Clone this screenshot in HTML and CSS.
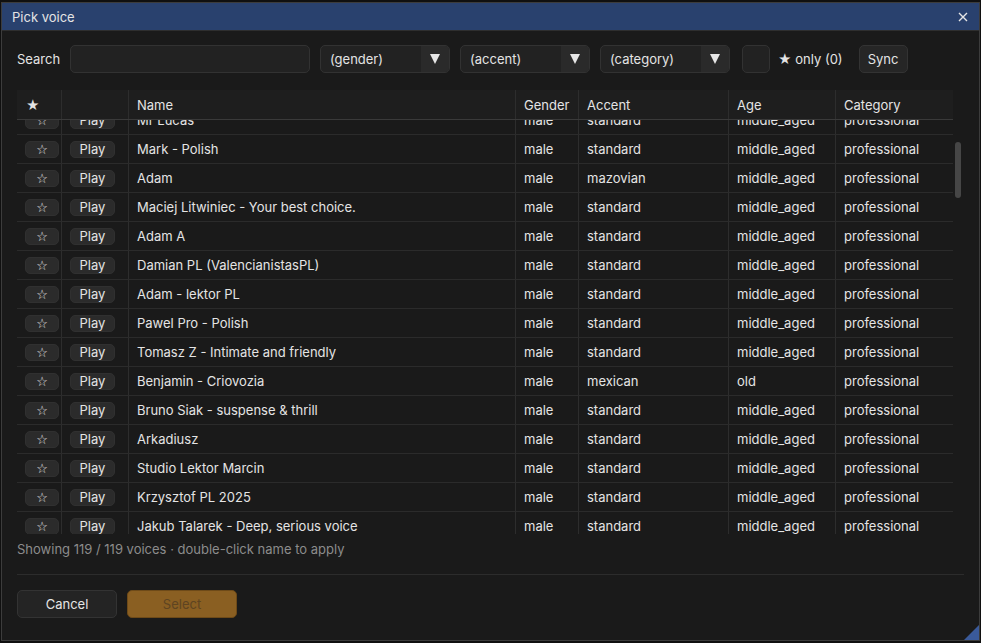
FILE: index.html
```html
<!DOCTYPE html>
<html lang="en">
<head>
  <meta charset="UTF-8">
  <title>Pick voice</title>
  <link rel="stylesheet" href="styles.css">
</head>
<body>
  <div class="window">
    <div class="titlebar">
      <span>Pick voice</span>
      <svg class="close" width="10" height="10" viewBox="0 0 10 10"><path d="M1 1L9 9M9 1L1 9" stroke="#e6e6e6" stroke-width="1.4"/></svg>
    </div>
    <div class="content">
      <div class="toolbar">
        <span class="label">Search</span>
        <div class="input"></div>
        <div class="combo"><span>(gender)</span><i></i></div>
        <div class="combo"><span>(accent)</span><i></i></div>
        <div class="combo last"><span>(category)</span><i></i></div>
        <div class="check"></div>
        <span class="only">&#9733; only (0)</span>
        <div class="btn sync">Sync</div>
      </div>

      <div class="table">
        <div class="thead">
          <div class="cell">&#9733;</div>
          <div class="cell"></div>
          <div class="cell">Name</div>
          <div class="cell">Gender</div>
          <div class="cell">Accent</div>
          <div class="cell">Age</div>
          <div class="cell">Category</div>
        </div>
        <div class="tbody">
          <div class="rows">
            <div class="row"><div class="cell"><b class="mini star">&#9734;</b></div><div class="cell"><b class="mini">Play</b></div><div class="cell">Mr Lucas</div><div class="cell">male</div><div class="cell">standard</div><div class="cell">middle_aged</div><div class="cell">professional</div></div>
            <div class="row"><div class="cell"><b class="mini star">&#9734;</b></div><div class="cell"><b class="mini">Play</b></div><div class="cell">Mark - Polish</div><div class="cell">male</div><div class="cell">standard</div><div class="cell">middle_aged</div><div class="cell">professional</div></div>
            <div class="row"><div class="cell"><b class="mini star">&#9734;</b></div><div class="cell"><b class="mini">Play</b></div><div class="cell">Adam</div><div class="cell">male</div><div class="cell">mazovian</div><div class="cell">middle_aged</div><div class="cell">professional</div></div>
            <div class="row"><div class="cell"><b class="mini star">&#9734;</b></div><div class="cell"><b class="mini">Play</b></div><div class="cell">Maciej Litwiniec - Your best choice.</div><div class="cell">male</div><div class="cell">standard</div><div class="cell">middle_aged</div><div class="cell">professional</div></div>
            <div class="row"><div class="cell"><b class="mini star">&#9734;</b></div><div class="cell"><b class="mini">Play</b></div><div class="cell">Adam A</div><div class="cell">male</div><div class="cell">standard</div><div class="cell">middle_aged</div><div class="cell">professional</div></div>
            <div class="row"><div class="cell"><b class="mini star">&#9734;</b></div><div class="cell"><b class="mini">Play</b></div><div class="cell">Damian PL (ValencianistasPL)</div><div class="cell">male</div><div class="cell">standard</div><div class="cell">middle_aged</div><div class="cell">professional</div></div>
            <div class="row"><div class="cell"><b class="mini star">&#9734;</b></div><div class="cell"><b class="mini">Play</b></div><div class="cell">Adam - lektor PL</div><div class="cell">male</div><div class="cell">standard</div><div class="cell">middle_aged</div><div class="cell">professional</div></div>
            <div class="row"><div class="cell"><b class="mini star">&#9734;</b></div><div class="cell"><b class="mini">Play</b></div><div class="cell">Pawel Pro - Polish</div><div class="cell">male</div><div class="cell">standard</div><div class="cell">middle_aged</div><div class="cell">professional</div></div>
            <div class="row"><div class="cell"><b class="mini star">&#9734;</b></div><div class="cell"><b class="mini">Play</b></div><div class="cell">Tomasz Z - Intimate and friendly</div><div class="cell">male</div><div class="cell">standard</div><div class="cell">middle_aged</div><div class="cell">professional</div></div>
            <div class="row"><div class="cell"><b class="mini star">&#9734;</b></div><div class="cell"><b class="mini">Play</b></div><div class="cell">Benjamin - Criovozia</div><div class="cell">male</div><div class="cell">mexican</div><div class="cell">old</div><div class="cell">professional</div></div>
            <div class="row"><div class="cell"><b class="mini star">&#9734;</b></div><div class="cell"><b class="mini">Play</b></div><div class="cell">Bruno Siak - suspense &amp; thrill</div><div class="cell">male</div><div class="cell">standard</div><div class="cell">middle_aged</div><div class="cell">professional</div></div>
            <div class="row"><div class="cell"><b class="mini star">&#9734;</b></div><div class="cell"><b class="mini">Play</b></div><div class="cell">Arkadiusz</div><div class="cell">male</div><div class="cell">standard</div><div class="cell">middle_aged</div><div class="cell">professional</div></div>
            <div class="row"><div class="cell"><b class="mini star">&#9734;</b></div><div class="cell"><b class="mini">Play</b></div><div class="cell">Studio Lektor Marcin</div><div class="cell">male</div><div class="cell">standard</div><div class="cell">middle_aged</div><div class="cell">professional</div></div>
            <div class="row"><div class="cell"><b class="mini star">&#9734;</b></div><div class="cell"><b class="mini">Play</b></div><div class="cell">Krzysztof PL 2025</div><div class="cell">male</div><div class="cell">standard</div><div class="cell">middle_aged</div><div class="cell">professional</div></div>
            <div class="row"><div class="cell"><b class="mini star">&#9734;</b></div><div class="cell"><b class="mini">Play</b></div><div class="cell">Jakub Talarek - Deep, serious voice</div><div class="cell">male</div><div class="cell">standard</div><div class="cell">middle_aged</div><div class="cell">professional</div></div>
          </div>
          <div class="scrollbar"><div class="thumb"></div></div>
        </div>
      </div>

      <div class="status">Showing 119 / 119 voices &middot; double-click name to apply</div>
      <div class="sep"></div>
      <div class="actions">
        <div class="btn cancel">Cancel</div>
        <div class="btn select">Select</div>
      </div>
    </div>
    <div class="grip"></div>
  </div>
</body>
</html>
```

FILE: styles.css
```css
html, body{
  margin:0;
  height:100%;
}
body{
  background:#101010;
  padding:2px 1px 0 1px;
  box-sizing:border-box;
  font-family:Inter, "Noto Sans", "DejaVu Sans", sans-serif;
  font-size:13px;
  color:#e4e4e4;
}

.window{
  position:relative;
  width:979px;
  height:639px;
  box-sizing:border-box;
  border:1px solid #3c3c3c;
  background:#1a1a1a;
  display:flex;
  flex-direction:column;
}
.titlebar{
  height:27px;
  background:#29416e;
  border-bottom:1px solid #2e2e2e;
  display:flex;
  align-items:center;
  justify-content:space-between;
  padding:0 11px 0 10px;
  flex:none;
}

.content{
  flex:1;
  display:flex;
  flex-direction:column;
  padding:14px 15px 0 15px;
}

/* search / filter row */
.toolbar{
  display:flex;
  align-items:center;
  height:28px;
}
.label{ width:53px; }
.input{
  width:238px;
  height:26px;
  border:1px solid #323232;
  border-radius:5px;
  background:#222;
  margin-right:10px;
}
.combo{
  width:128px;
  height:26px;
  border:1px solid #323232;
  border-radius:5px;
  background:#222;
  display:flex;
  align-items:center;
  margin-right:10px;
  overflow:hidden;
}
.combo span{
  flex:1;
  padding-left:9px;
}
.combo i{
  width:28px;
  height:100%;
  background:#2a2a2a;
  display:flex;
  align-items:center;
  justify-content:center;
}
.combo i::before{
  content:"";
  border-left:5px solid transparent;
  border-right:5px solid transparent;
  border-top:10px solid #e6e6e6;
}
.combo.last{ margin-right:12px; }
.check{
  width:26px;
  height:26px;
  border:1px solid #323232;
  border-radius:5px;
  background:#222;
  margin-right:8px;
}
.only{ margin-right:16px; }
.btn{
  box-sizing:border-box;
  height:28px;
  border:1px solid #333;
  border-radius:5px;
  background:#262626;
  display:flex;
  align-items:center;
  justify-content:center;
}
.sync{ width:49px; }

/* table */
.table{
  margin-top:17px;
  width:948px;
}
.thead,
.row{
  display:grid;
  grid-template-columns:45px 67px 387px 63px 150px 107px 117px;
}
.thead{
  width:936px;
  height:29px;
  background:#1e1e1e;
  border-bottom:1px solid #3a3a3a;
  position:relative;
  z-index:1;
}
.cell{
  border-right:1px solid #2d2d2d;
  padding-left:8px;
  display:flex;
  align-items:center;
  white-space:nowrap;
  overflow:hidden;
}
.cell:last-child{ border-right:none; }
.thead .cell:first-child{ padding-left:9px; }

.tbody{
  height:414px;
  overflow:hidden;
  display:flex;
}
.rows{
  width:936px;
  margin-top:-14px;
}
.row{
  height:28px;
  border-bottom:1px solid #2b2b2b;
}
.mini{
  font-weight:normal;
  height:17px;
  background:#2b2b2b;
  border:1px solid #303030;
  border-radius:5px;
  display:flex;
  align-items:center;
  justify-content:center;
  box-sizing:border-box;
  width:45px;
}
.star{
  width:34px;
  font-family:"DejaVu Sans", sans-serif;
  font-size:13px;
  line-height:1;
}
.scrollbar{
  flex:1;
  position:relative;
}
.thumb{
  position:absolute;
  left:2px;
  top:22px;
  width:6px;
  height:56px;
  border-radius:3px;
  background:#464646;
}

.status{
  height:30px;
  line-height:30px;
  color:#8c8c8c;
}
.sep{
  margin-top:10px;
  height:1px;
  background:#2c2c2c;
}
.actions{
  margin-top:15px;
  display:flex;
  gap:10px;
}
.cancel{
  width:100px;
  background:#242424;
}
.select{
  width:110px;
  background:#8a5f22;
  border-color:#6e4a18;
  color:#5e4421;
}
.grip{
  position:absolute;
  right:0;
  bottom:0;
  width:0;
  height:0;
  border-left:15px solid transparent;
  border-bottom:15px solid #3a5a9a;
}
```
